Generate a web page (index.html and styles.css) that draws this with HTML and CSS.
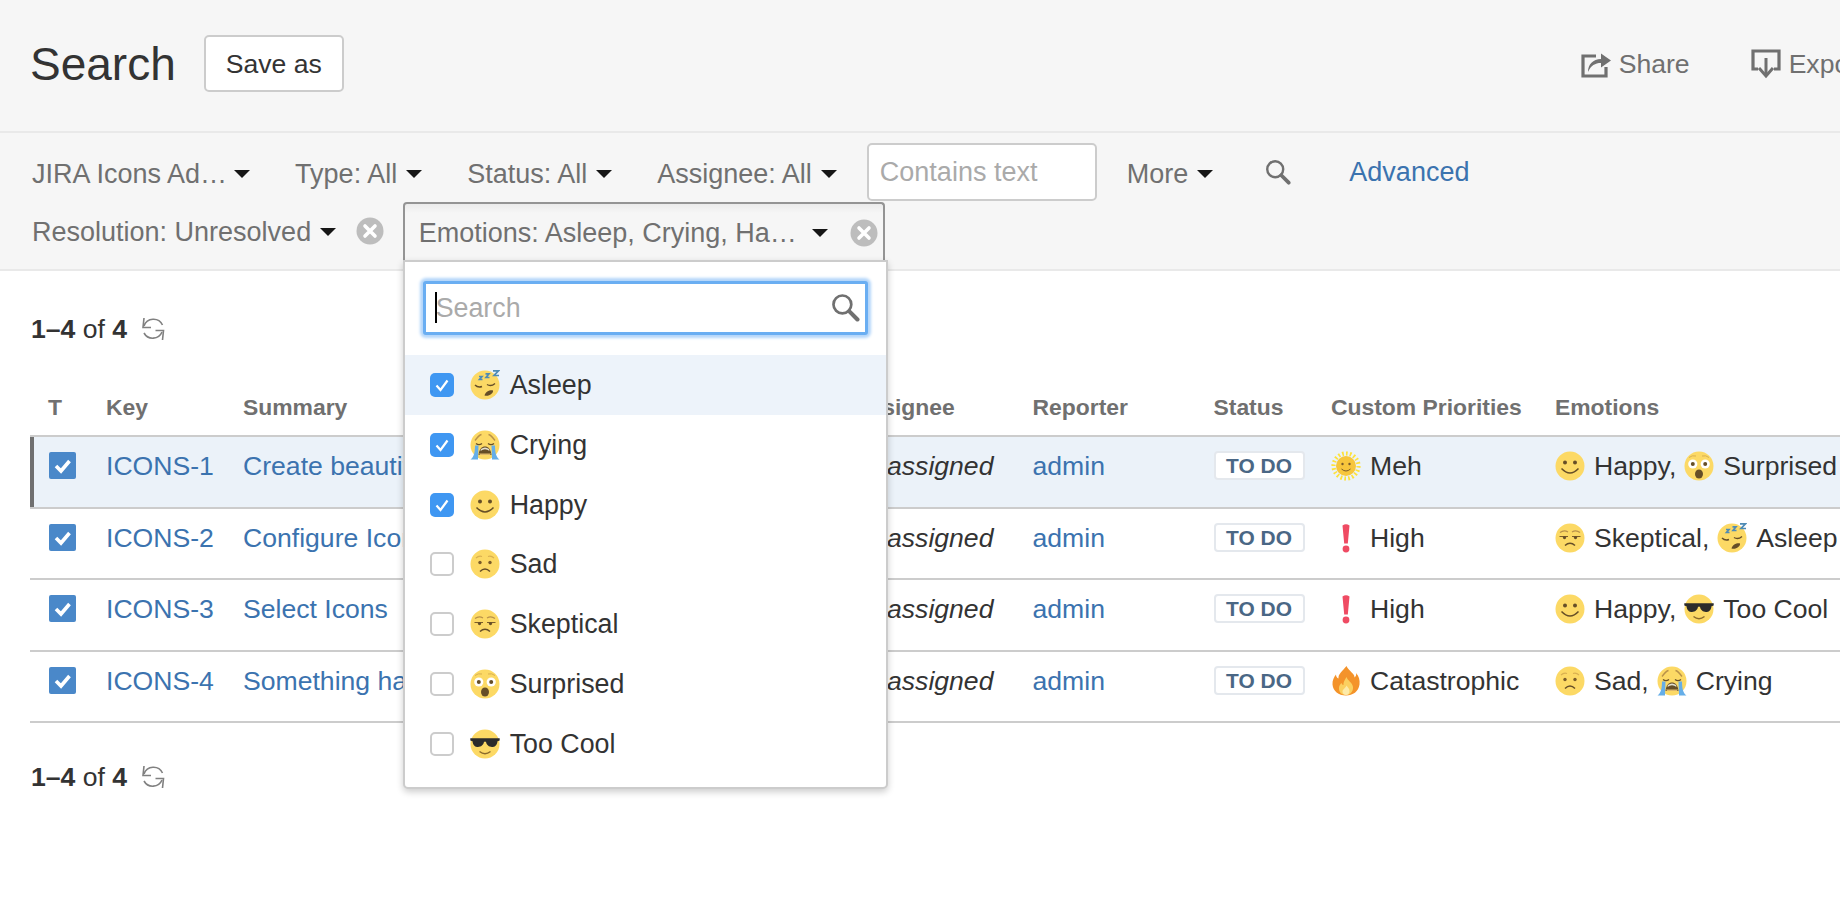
FILE: index.html
```html
<!DOCTYPE html>
<html lang="en">
<head>
<meta charset="utf-8">
<title>Search</title>
<link rel="stylesheet" href="styles.css">
</head>
<body>
<svg class="defs" aria-hidden="true">
  <symbol id="e-happy" viewBox="0 0 30 30"><circle cx="15" cy="15" r="14.5" fill="#fcd965"/><circle cx="10" cy="11.5" r="2" fill="#664e27"/><circle cx="20" cy="11.5" r="2" fill="#664e27"/><path d="M6.5 17.5Q15 26.5 23.5 17.5" fill="none" stroke="#664e27" stroke-width="1.5"/></symbol>
  <symbol id="e-sad" viewBox="0 0 30 30"><circle cx="15" cy="15" r="14.5" fill="#fcd965"/><circle cx="10" cy="13.5" r="1.7" fill="#7a5c2a"/><circle cx="20" cy="13.5" r="1.7" fill="#7a5c2a"/><path d="M6 9Q9 6.2 12 7.5M18 7.5Q21 6.2 24 9" fill="none" stroke="#d9b050" stroke-width="1.1"/><path d="M10 22.5Q15 17.5 20 22.5" fill="none" stroke="#664e27" stroke-width="1.5"/></symbol>
  <symbol id="e-skeptical" viewBox="0 0 30 30"><circle cx="15" cy="15" r="14.5" fill="#fcd965"/><path d="M5 9.5Q9 6.5 13 9M17 9Q21 6.5 25 9.5" fill="none" stroke="#b8914a" stroke-width="1.2"/><path d="M4.5 13.5H13M17 13.5H25.5" fill="none" stroke="#7a5c2a" stroke-width="1.2"/><circle cx="9.5" cy="14.6" r="1.6" fill="#664e27"/><circle cx="20.5" cy="14.6" r="1.6" fill="#664e27"/><path d="M10 22.5Q15 18 20 22.5" fill="none" stroke="#664e27" stroke-width="1.5"/></symbol>
  <symbol id="e-surprised" viewBox="0 0 30 30"><circle cx="15" cy="15" r="14.5" fill="#fcd965"/><path d="M5 6.5Q8 4 12 5M18 5Q22 4 25 6.5" fill="none" stroke="#d9b050" stroke-width="1"/><circle cx="8.8" cy="13" r="4.6" fill="#fff"/><circle cx="21.2" cy="13" r="4.6" fill="#fff"/><circle cx="8.8" cy="13" r="2" fill="#664e27"/><circle cx="21.2" cy="13" r="2" fill="#664e27"/><ellipse cx="15" cy="23" rx="4" ry="4.6" fill="#664e27"/></symbol>
  <symbol id="e-cool" viewBox="0 0 30 30"><circle cx="15" cy="15" r="14.5" fill="#fcd965"/><path d="M.3 9.2H29.7V11.5L27.5 12.2C27 16.6 24.6 18 22 18C19 18 16.5 16 16 12.8H14C13.5 16 11 18 8 18C5.4 18 3 16.6 2.5 12.2L.3 11.5Z" fill="#2b2b2b"/><path d="M9.5 22.5Q15 27 20.5 22.5" fill="none" stroke="#8a6a2c" stroke-width="1.4"/></symbol>
  <symbol id="e-asleep" viewBox="0 0 30 30"><circle cx="15" cy="15" r="14.5" fill="#fcd965"/><path d="M5 15Q8 18 12 16.5M17 14.5Q21 17 25 13.5" fill="none" stroke="#664e27" stroke-width="1.4"/><path d="M14.5 25.5C15.5 21.5 20 19.8 23 20.5C23.5 23.5 18.5 27 14.5 25.5Z" fill="#664e27"/><path d="M9 6.5H12L9.5 9.5H12.5M15.5 3.8H19L16 7.5H19.5M23 .8H28.5L24 5.5H29" fill="none" stroke="#4f8bb5" stroke-width="1.7"/></symbol>
  <symbol id="e-crying" viewBox="0 0 30 30"><circle cx="15" cy="15" r="14.5" fill="#fcd965"/><path d="M5 10.5Q9 5 11.5 4.5M25 10.5Q21 5 18.5 4.5" fill="none" stroke="#b8914a" stroke-width="1.3"/><path d="M6 13.5Q9 15.8 12 13.5M18 13.5Q21 15.8 24 13.5" fill="none" stroke="#664e27" stroke-width="1.4"/><path d="M8.5 25C9 19 12 16.5 15 16.5S21 19 21.5 25Z" fill="#664e27"/><path d="M10.5 21Q15 17.5 19.5 21L19 19Q15 16 11 19Z" fill="#e3e0cf"/><path d="M10 25H20L21 23.5H9Z" fill="#e0b96a"/><path d="M5 15.5H8.5L8 29.5H.5C4 27 5 22 5 15.5ZM25 15.5H21.5L22 29.5H29.5C26 27 25 22 25 15.5Z" fill="#65aee8"/></symbol>
  <symbol id="e-sun" viewBox="0 0 30 30"><circle cx="15" cy="15" r="12.5" fill="none" stroke="#fde23a" stroke-width="4.2" stroke-dasharray="1.7 2.2"/><circle cx="15" cy="15" r="10" fill="#f7c63c"/><circle cx="11.5" cy="13" r="1.2" fill="#7a5c2a"/><circle cx="18.5" cy="13" r="1.2" fill="#7a5c2a"/><path d="M10.5 18Q15 22 19.5 18" fill="none" stroke="#7a5c2a" stroke-width="1"/></symbol>
  <symbol id="e-high" viewBox="0 0 30 30"><path d="M11.5 2.5Q15 0 18.5 2.5L16.8 20.5H13.2Z" fill="#ef4b63"/><circle cx="15" cy="26" r="3.4" fill="#ef4b63"/></symbol>
  <symbol id="e-fire" viewBox="0 0 30 30"><path d="M15.5 0C17.5 5 24 7.5 23.5 11.5C25 10.5 25.5 8.5 25 7C28 10 29 14 28.5 18.5C27.5 25.5 22 29.5 15 29.5C7.5 29.5 2 25 1.5 18.5C1.2 14.5 3 11 5 8.5C5 10.5 6 12 7.5 12.5C7 8 11.5 5 15.5 0Z" fill="#f4932a"/><path d="M15.5 11C16.5 14.5 21.5 16.5 22 21C22.4 25.5 19 29 15 29C10.5 29 7.5 26 8 21.5C8.2 19.5 9.5 18 10.5 17C10.8 18 11.5 19 12.5 19C12 16 14 14 15.5 11Z" fill="#fbcf5f"/><path d="M15.5 19.5C16.5 21.5 18.5 22.5 18.5 25C18.5 27.5 17 29 15 29C13 29 11.5 27.5 11.5 25.5C11.5 23.5 14.5 22 15.5 19.5Z" fill="#fdeaa8"/></symbol>
  <symbol id="i-clear" viewBox="0 0 28 28"><circle cx="14" cy="14" r="13.5" fill="#bdbdbd"/><path d="M9 9L19 19M19 9L9 19" stroke="#fff" stroke-width="3.6" stroke-linecap="round"/></symbol>
  <symbol id="i-search" viewBox="0 0 28 28"><circle cx="11" cy="11" r="8.6" fill="none" stroke="currentColor" stroke-width="2.6"/><path d="M17.5 17.5L25.5 25.5" stroke="currentColor" stroke-width="4" stroke-linecap="round"/></symbol>
  <symbol id="i-refresh" viewBox="0 0 24 24"><path d="M3 9A10 10 0 0 1 21.5 8" fill="none" stroke="currentColor" stroke-width="1.6"/><path d="M3 1L2 10.5L10 10.5" fill="none" stroke="currentColor" stroke-width="1.6"/><path d="M21 15A10 10 0 0 1 3 16" fill="none" stroke="currentColor" stroke-width="1.6"/><path d="M21.5 23L22.5 13.5L14.5 13.5" fill="none" stroke="currentColor" stroke-width="1.6"/></symbol>
</svg>

<div class="page">
  <header class="top">
    <h1 class="title">Search</h1>
    <button class="save">Save as</button>
    <div class="actions">
      <a class="action share">
        <svg class="action-icon" viewBox="0 0 30 28"><path d="M15 6H2V26H25V17" fill="none" stroke="currentColor" stroke-width="3.2"/><path d="M7 22C7 14 12 9.5 20 9V3.5L30 10.5L20 17.5V13C14 13 10 15.5 7 22Z" fill="currentColor"/></svg>
        Share
      </a>
      <a class="action">
        <svg class="action-icon" viewBox="0 0 30 30"><path d="M7 20H2V2H28V20H23" fill="none" stroke="currentColor" stroke-width="3.2"/><path d="M15 9V25" stroke="currentColor" stroke-width="3"/><path d="M8 19L15 27L22 19" fill="none" stroke="currentColor" stroke-width="3"/></svg>
        Export
      </a>
    </div>
  </header>

  <section class="filters">
    <div class="filter-row">
      <span class="crit">JIRA Icons Ad…<i class="caret tight"></i></span>
      <span class="crit">Type: All<i class="caret"></i></span>
      <span class="crit">Status: All<i class="caret"></i></span>
      <span class="crit last">Assignee: All<i class="caret"></i></span>
      <input class="text-filter" type="text" placeholder="Contains text">
      <span class="crit more">More<i class="caret"></i></span>
      <svg class="go"><use href="#i-search"/></svg>
      <a class="advanced">Advanced</a>
    </div>
    <div class="filter-row second">
      <span class="crit res">Resolution: Unresolved<i class="caret"></i><svg class="clear res-clear"><use href="#i-clear"/></svg></span>
      <div class="open-crit">
        <span class="open-label">Emotions: Asleep, Crying, Ha…</span><i class="caret open-caret"></i><svg class="clear open-clear"><use href="#i-clear"/></svg>
        <div class="panel">
          <div class="panel-search">
            <input class="panel-input" type="text" placeholder="Search">
            <span class="text-caret"></span>
            <svg class="panel-icon"><use href="#i-search"/></svg>
          </div>
          <ul class="options">
            <li class="option active"><span class="box on"><svg viewBox="0 0 24 24"><path d="M6.5 12.5L10.5 17L17.5 7.5" fill="none" stroke="#fff" stroke-width="2.2"/></svg></span><svg class="emo"><use href="#e-asleep"/></svg>Asleep</li>
            <li class="option"><span class="box on"><svg viewBox="0 0 24 24"><path d="M6.5 12.5L10.5 17L17.5 7.5" fill="none" stroke="#fff" stroke-width="2.2"/></svg></span><svg class="emo"><use href="#e-crying"/></svg>Crying</li>
            <li class="option"><span class="box on"><svg viewBox="0 0 24 24"><path d="M6.5 12.5L10.5 17L17.5 7.5" fill="none" stroke="#fff" stroke-width="2.2"/></svg></span><svg class="emo"><use href="#e-happy"/></svg>Happy</li>
            <li class="option"><span class="box"></span><svg class="emo"><use href="#e-sad"/></svg>Sad</li>
            <li class="option"><span class="box"></span><svg class="emo"><use href="#e-skeptical"/></svg>Skeptical</li>
            <li class="option"><span class="box"></span><svg class="emo"><use href="#e-surprised"/></svg>Surprised</li>
            <li class="option"><span class="box"></span><svg class="emo"><use href="#e-cool"/></svg>Too Cool</li>
          </ul>
        </div>
      </div>
    </div>
  </section>

  <main class="results">
    <div class="count"><span><b>1–4</b> of <b>4</b></span><svg class="refresh"><use href="#i-refresh"/></svg></div>
    <div class="issues">
      <div class="row head">
        <div>T</div><div>Key</div><div>Summary</div><div>Assignee</div><div>Reporter</div><div>Status</div><div>Custom Priorities</div><div>Emotions</div>
      </div>
      <div class="row selected">
        <div><span class="tick"><svg viewBox="0 0 27 27"><path d="M7 14L12 19L20.5 9" fill="none" stroke="#fff" stroke-width="3.6"/></svg></span></div>
        <div><a class="link">ICONS-1</a></div>
        <div><a class="link">Create beautiful icons</a></div>
        <div><em>Unassigned</em></div>
        <div><a class="link">admin</a></div>
        <div><span class="lozenge">To Do</span></div>
        <div class="tags"><svg class="emo"><use href="#e-sun"/></svg>Meh</div>
        <div class="tags"><svg class="emo"><use href="#e-happy"/></svg>Happy,<svg class="emo"><use href="#e-surprised"/></svg>Surprised</div>
      </div>
      <div class="row">
        <div><span class="tick"><svg viewBox="0 0 27 27"><path d="M7 14L12 19L20.5 9" fill="none" stroke="#fff" stroke-width="3.6"/></svg></span></div>
        <div><a class="link">ICONS-2</a></div>
        <div><a class="link">Configure Icons</a></div>
        <div><em>Unassigned</em></div>
        <div><a class="link">admin</a></div>
        <div><span class="lozenge">To Do</span></div>
        <div class="tags"><svg class="emo"><use href="#e-high"/></svg>High</div>
        <div class="tags"><svg class="emo"><use href="#e-skeptical"/></svg>Skeptical,<svg class="emo"><use href="#e-asleep"/></svg>Asleep</div>
      </div>
      <div class="row">
        <div><span class="tick"><svg viewBox="0 0 27 27"><path d="M7 14L12 19L20.5 9" fill="none" stroke="#fff" stroke-width="3.6"/></svg></span></div>
        <div><a class="link">ICONS-3</a></div>
        <div><a class="link">Select Icons</a></div>
        <div><em>Unassigned</em></div>
        <div><a class="link">admin</a></div>
        <div><span class="lozenge">To Do</span></div>
        <div class="tags"><svg class="emo"><use href="#e-high"/></svg>High</div>
        <div class="tags"><svg class="emo"><use href="#e-happy"/></svg>Happy,<svg class="emo"><use href="#e-cool"/></svg>Too Cool</div>
      </div>
      <div class="row">
        <div><span class="tick"><svg viewBox="0 0 27 27"><path d="M7 14L12 19L20.5 9" fill="none" stroke="#fff" stroke-width="3.6"/></svg></span></div>
        <div><a class="link">ICONS-4</a></div>
        <div><a class="link">Something happened</a></div>
        <div><em>Unassigned</em></div>
        <div><a class="link">admin</a></div>
        <div><span class="lozenge">To Do</span></div>
        <div class="tags"><svg class="emo"><use href="#e-fire"/></svg>Catastrophic</div>
        <div class="tags"><svg class="emo"><use href="#e-sad"/></svg>Sad,<svg class="emo"><use href="#e-crying"/></svg>Crying</div>
      </div>
    </div>
    <div class="count bottom"><span><b>1–4</b> of <b>4</b></span><svg class="refresh"><use href="#i-refresh"/></svg></div>
  </main>
</div>
</body>
</html>
```

FILE: styles.css
```css
html, body {
  margin: 0;
  padding: 0;
  height: 900px;
  overflow: hidden;
  background: #fff;
}

body {
  font-family: "Liberation Sans", Arial, sans-serif;
  font-size: 26.6px;
  line-height: 30px;
  color: #333;
}

.defs {
  position: absolute;
  width: 0;
  height: 0;
}

.page {
  width: 1880px;
}

/* Title bar */
.top {
  display: flex;
  align-items: center;
  box-sizing: border-box;
  height: 133px;
  padding: 0 14.5px 4px 30px;
  background: #f6f6f6;
  border-bottom: 2px solid #e9e9e9;
}

.title {
  margin: 0;
  font-size: 46px;
  line-height: 54px;
  font-weight: 400;
  color: #333;
}

.save {
  box-sizing: border-box;
  width: 140px;
  height: 57px;
  margin-left: 28px;
  padding: 0;
  font: inherit;
  color: #333;
  background: #fff;
  border: 2px solid #ccc;
  border-radius: 5px;
}

.actions {
  display: flex;
  margin-left: auto;
  gap: 61px;
}

.action {
  display: flex;
  align-items: center;
  gap: 8px;
  color: #707070;
}

.action-icon {
  width: 30px;
  height: 30px;
}

/* Filter bar */
.filters {
  box-sizing: border-box;
  height: 138px;
  padding-top: 12px;
  background: #f6f6f6;
  border-bottom: 2px solid #e9e9e9;
}

.filter-row {
  display: flex;
  align-items: center;
  height: 58px;
  padding-left: 32px;
  font-size: 27px;
  color: #707070;
}

.second {
  margin-top: -1px;
}

.crit {
  display: flex;
  align-items: center;
  margin-right: 45px;
  white-space: nowrap;
}

.crit.last {
  margin-right: 30px;
}

.crit.more {
  margin: 0 52px 0 30px;
}

.crit.res {
  margin: 2px 18.5px 0 0;
}

.caret {
  display: block;
  width: 0;
  height: 0;
  margin-left: 9px;
  border-style: solid;
  border-width: 8px 8px 0;
  border-color: #161616 transparent transparent;
}

.caret.tight {
  margin-left: 7px;
}

.text-filter {
  box-sizing: border-box;
  width: 230px;
  height: 58px;
  padding: 0 11px;
  margin-top: -4px;
  font: inherit;
  color: #333;
  background: #fff;
  border: 2px solid #ccc;
  border-radius: 5px;
  outline: none;
}

.text-filter::placeholder,
.panel-input::placeholder {
  color: #aaa;
  opacity: 1;
}

.go {
  width: 26px;
  height: 26px;
  margin-top: -4px;
  color: #707070;
}

.advanced {
  margin: -4px 0 0 58px;
  color: #3b73af;
}

.clear {
  width: 28px;
  height: 28px;
}

.res-clear {
  margin: -2px 0 0 20px;
}

/* Open criterion and its menu */
.open-crit {
  position: relative;
  display: flex;
  align-items: center;
  box-sizing: border-box;
  width: 482px;
  height: 58px;
  padding: 2px 5px 0 14px;
  border: 2px solid #949494;
  border-bottom: 0;
  border-radius: 4px 4px 0 0;
  background: linear-gradient(#ebebeb, #f6f6f6 9px);
}

.open-label {
  width: 377px;
  white-space: nowrap;
}

.open-caret {
  margin: 0 22px 0 16px;
}

.panel {
  position: absolute;
  top: 56px;
  left: -2px;
  z-index: 5;
  box-sizing: border-box;
  width: 485px;
  height: 529px;
  font-size: 26.8px;
  color: #333;
  background: #fff;
  border: 2px solid #ccc;
  border-radius: 0 0 5px 5px;
  box-shadow: 0 3px 7px rgba(0, 0, 0, 0.2);
}

.panel-search {
  position: relative;
  margin: 19px 18px 0 18px;
}

.panel-input {
  display: block;
  box-sizing: border-box;
  width: 100%;
  height: 54px;
  padding: 0 45px 0 10px;
  font: inherit;
  background: #fff;
  border: 3px solid #6aaef2;
  border-radius: 3px;
  box-shadow: 0 0 3px 3px #b4d6fa;
  outline: none;
}

.text-caret {
  position: absolute;
  top: 11px;
  left: 12px;
  width: 2px;
  height: 31px;
  background: #000;
}

.panel-icon {
  position: absolute;
  top: 12px;
  right: 8px;
  width: 29px;
  height: 29px;
  color: #707070;
}

.options {
  margin: 20px 0 0;
  padding: 0;
  list-style: none;
}

.option {
  display: flex;
  align-items: center;
  height: 59.85px;
  padding-left: 25px;
}

.option.active {
  background: #edf3fa;
}

.box {
  box-sizing: border-box;
  flex: none;
  width: 24px;
  height: 24px;
  margin-right: 16px;
  background: #fff;
  border: 2px solid #ccc;
  border-radius: 5px;
}

.box.on {
  background: #3f97f2;
  border: 0;
}

.box svg {
  display: block;
  width: 24px;
  height: 24px;
}

.emo {
  flex: none;
  width: 30px;
  height: 30px;
  margin-right: 10px;
}

/* Results */
.results {
  padding-top: 42px;
}

.count {
  display: flex;
  align-items: center;
  height: 32px;
  padding-left: 31px;
  gap: 14px;
}

.count.bottom {
  margin-top: 38px;
}

.refresh {
  width: 24px;
  height: 24px;
  color: #808080;
}

.issues {
  margin: 1px 0 0 30px;
}

.row {
  display: grid;
  grid-template-columns: 58px 137px 610px 179.5px 181px 117.5px 224px 1fr;
  box-sizing: border-box;
  height: 71.5px;
  padding: 14px 0 0 18px;
  border-bottom: 2px solid #ccc;
  white-space: nowrap;
}

.row.head {
  height: 91px;
  padding-top: 46px;
  padding-bottom: 0;
  font-size: 22.9px;
  font-weight: 700;
  color: #707070;
}

.row.selected {
  background: #ebf2f9;
  box-shadow: inset 4px 0 0 #707070;
}

.link {
  color: #3b73af;
}

.tick {
  display: block;
  width: 27px;
  height: 27px;
  margin: 1px 0 0 1px;
  background: #4a88c9;
  border-radius: 2px;
}

.tick svg {
  display: block;
  width: 27px;
  height: 27px;
}

.lozenge {
  display: block;
  box-sizing: border-box;
  width: 91px;
  height: 29px;
  font-size: 20.9px;
  line-height: 25px;
  font-weight: 700;
  text-align: center;
  text-transform: uppercase;
  color: #4a6785;
  background: #fff;
  border: 2px solid #e4e8ed;
  border-radius: 4px;
}

.tags {
  display: flex;
  align-items: flex-start;
}

.tags .emo {
  margin-right: 9px;
}

.tags .emo:not(:first-child) {
  margin-left: 8px;
}
```
